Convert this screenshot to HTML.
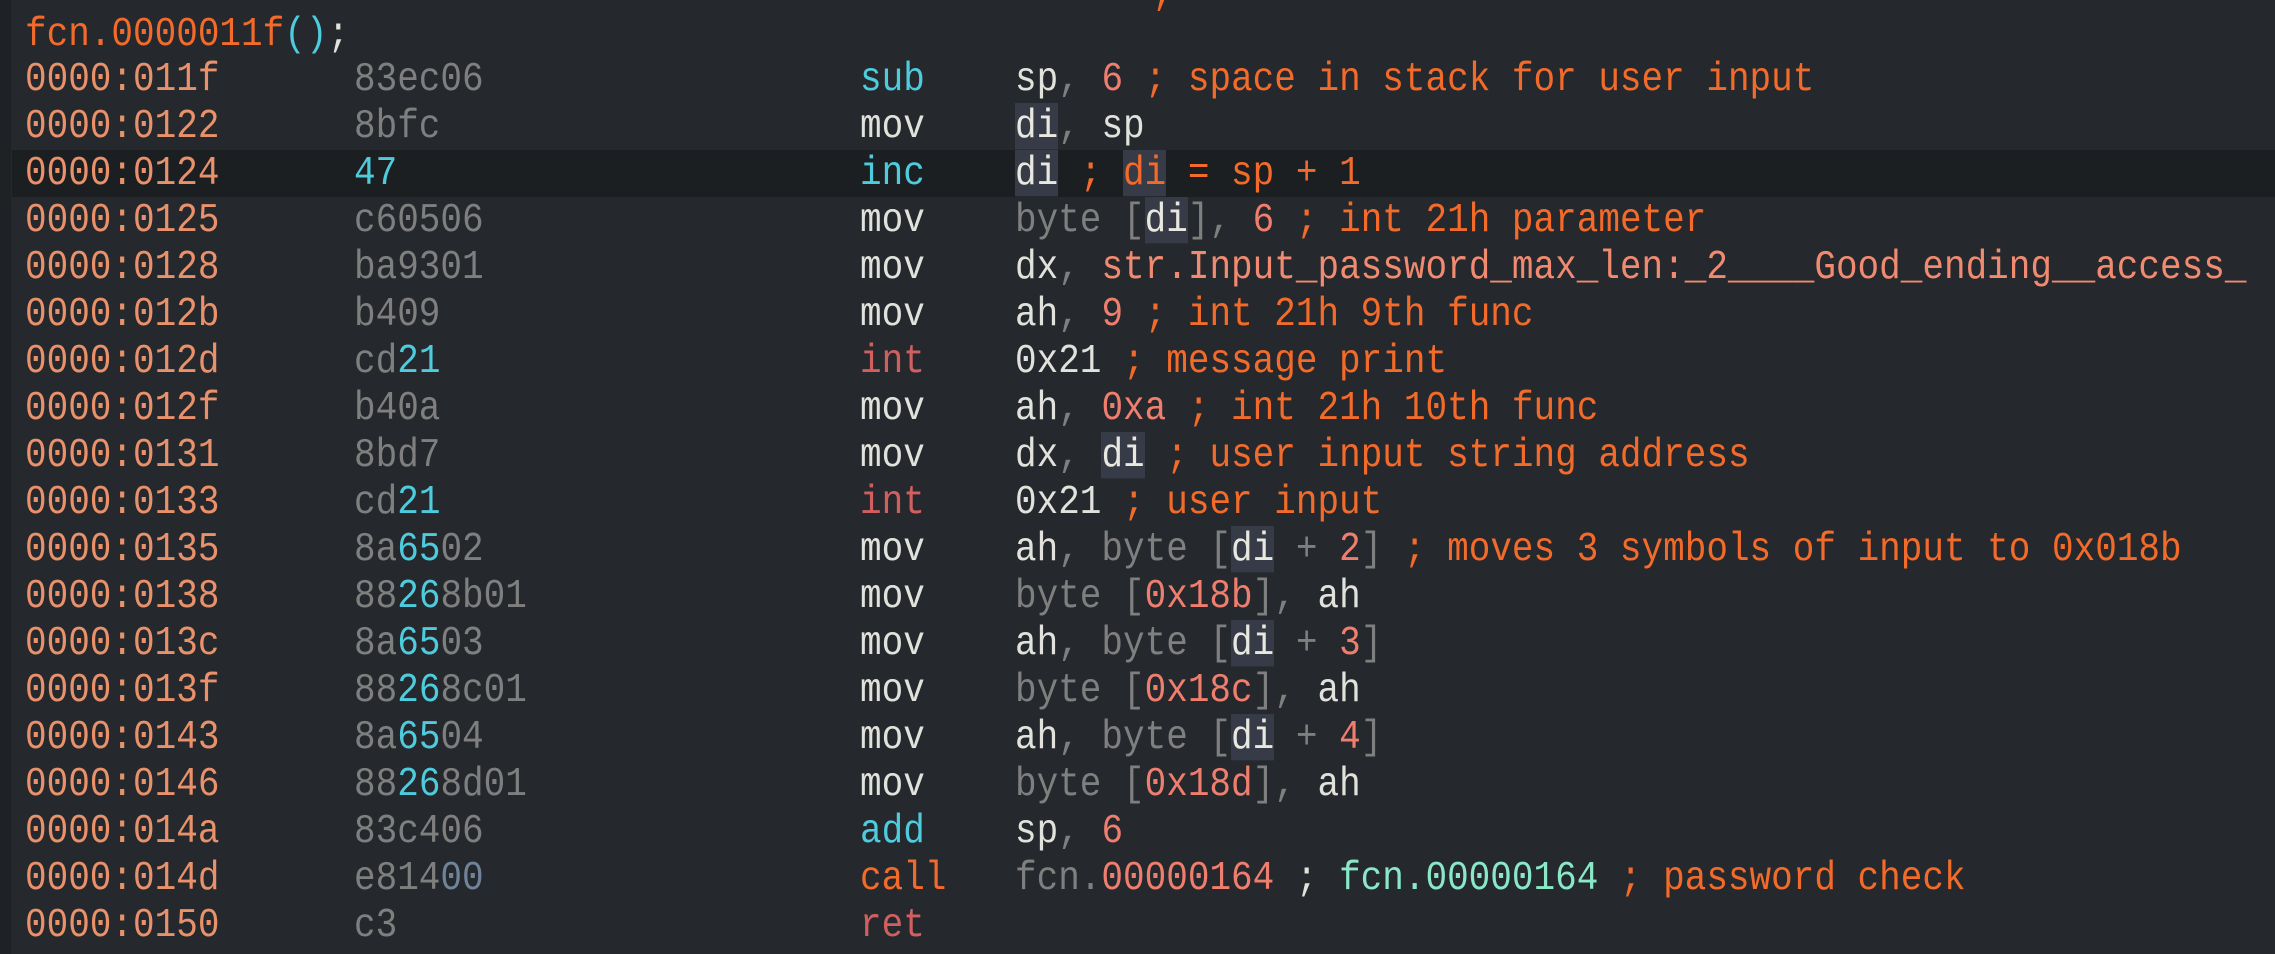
<!DOCTYPE html>
<html><head><meta charset="utf-8"><style>
html,body{margin:0;padding:0;}
body{width:2275px;height:954px;background:#25282c;overflow:hidden;position:relative;font-family:"Liberation Mono","DejaVu Sans Mono",monospace;font-size:36px;color:#e2e2dc;}
.strip{position:absolute;left:0;top:0;width:11px;height:954px;background:#1f2225;}
.r{position:absolute;left:12px;right:0;height:47px;line-height:47px;white-space:pre;}
.hl{background:#1c1f22;}
.c{position:absolute;top:0;transform:scaleY(1.13);transform-origin:50% 55%;}
.a{left:13px;color:#e8916a;}
.b{left:342px;color:#7f7f7f;}
.m{left:848px;}
.o{left:1003px;}
.cy{color:#4ecbdc}.w{color:#e2e2dc}.g{color:#7f7f7f}.or{color:#f26b2a}.n{color:#ef7e6e}.rd{color:#d06060}.tl{color:#8ae8c8}.bg{color:#6f8499}.sa{color:#f08a70}
.d,.dn{background:#363b47;}
.d{color:#e8e8e0}
.dn{color:#f26b2a}
</style></head><body>
<div class="strip"></div>
<div class="r" style="top:-30px"><span class="c or" style="left:1141px">,</span></div>
<div class="r" style="top:11px"><span class="c" style="left:13px"><span class="or">fcn.0000011f</span><span class="cy">()</span><span class="w">;</span></span></div>
<div class="r" style="top:56px"><span class="c a">0000:011f</span><span class="c b">83ec06</span><span class="c m cy">sub</span><span class="c o"><span class="w">sp</span><span class="g">,</span> <span class="n">6</span><span class="or"> ; space in stack for user input</span></span></div>
<div class="r" style="top:103px"><span class="c a">0000:0122</span><span class="c b">8bfc</span><span class="c m w">mov</span><span class="c o"><span class="d">di</span><span class="g">,</span> <span class="w">sp</span></span></div>
<div class="r hl" style="top:150px"><span class="c a">0000:0124</span><span class="c b cy">47</span><span class="c m cy">inc</span><span class="c o"><span class="d">di</span><span class="or"> ; </span><span class="dn">di</span><span class="or"> = sp + 1</span></span></div>
<div class="r" style="top:197px"><span class="c a">0000:0125</span><span class="c b">c60506</span><span class="c m w">mov</span><span class="c o"><span class="g">byte [</span><span class="d">di</span><span class="g">],</span> <span class="n">6</span><span class="or"> ; int 21h parameter</span></span></div>
<div class="r" style="top:244px"><span class="c a">0000:0128</span><span class="c b">ba9301</span><span class="c m w">mov</span><span class="c o"><span class="w">dx</span><span class="g">,</span> <span class="sa">str.Input_password_max_len:_2____Good_ending__access_</span></span></div>
<div class="r" style="top:291px"><span class="c a">0000:012b</span><span class="c b">b409</span><span class="c m w">mov</span><span class="c o"><span class="w">ah</span><span class="g">,</span> <span class="n">9</span><span class="or"> ; int 21h 9th func</span></span></div>
<div class="r" style="top:338px"><span class="c a">0000:012d</span><span class="c b">cd<span class="cy">21</span></span><span class="c m rd">int</span><span class="c o"><span class="w">0x21</span><span class="or"> ; message print</span></span></div>
<div class="r" style="top:385px"><span class="c a">0000:012f</span><span class="c b">b40a</span><span class="c m w">mov</span><span class="c o"><span class="w">ah</span><span class="g">,</span> <span class="n">0xa</span><span class="or"> ; int 21h 10th func</span></span></div>
<div class="r" style="top:432px"><span class="c a">0000:0131</span><span class="c b">8bd7</span><span class="c m w">mov</span><span class="c o"><span class="w">dx</span><span class="g">,</span> <span class="d">di</span><span class="or"> ; user input string address</span></span></div>
<div class="r" style="top:479px"><span class="c a">0000:0133</span><span class="c b">cd<span class="cy">21</span></span><span class="c m rd">int</span><span class="c o"><span class="w">0x21</span><span class="or"> ; user input</span></span></div>
<div class="r" style="top:526px"><span class="c a">0000:0135</span><span class="c b">8a<span class="cy">65</span>02</span><span class="c m w">mov</span><span class="c o"><span class="w">ah</span><span class="g">, byte [</span><span class="d">di</span><span class="g"> + </span><span class="n">2</span><span class="g">]</span><span class="or"> ; moves 3 symbols of input to 0x018b</span></span></div>
<div class="r" style="top:573px"><span class="c a">0000:0138</span><span class="c b">88<span class="cy">26</span>8b01</span><span class="c m w">mov</span><span class="c o"><span class="g">byte [</span><span class="n">0x18b</span><span class="g">],</span> <span class="w">ah</span></span></div>
<div class="r" style="top:620px"><span class="c a">0000:013c</span><span class="c b">8a<span class="cy">65</span>03</span><span class="c m w">mov</span><span class="c o"><span class="w">ah</span><span class="g">, byte [</span><span class="d">di</span><span class="g"> + </span><span class="n">3</span><span class="g">]</span></span></div>
<div class="r" style="top:667px"><span class="c a">0000:013f</span><span class="c b">88<span class="cy">26</span>8c01</span><span class="c m w">mov</span><span class="c o"><span class="g">byte [</span><span class="n">0x18c</span><span class="g">],</span> <span class="w">ah</span></span></div>
<div class="r" style="top:714px"><span class="c a">0000:0143</span><span class="c b">8a<span class="cy">65</span>04</span><span class="c m w">mov</span><span class="c o"><span class="w">ah</span><span class="g">, byte [</span><span class="d">di</span><span class="g"> + </span><span class="n">4</span><span class="g">]</span></span></div>
<div class="r" style="top:761px"><span class="c a">0000:0146</span><span class="c b">88<span class="cy">26</span>8d01</span><span class="c m w">mov</span><span class="c o"><span class="g">byte [</span><span class="n">0x18d</span><span class="g">],</span> <span class="w">ah</span></span></div>
<div class="r" style="top:808px"><span class="c a">0000:014a</span><span class="c b">83c406</span><span class="c m cy">add</span><span class="c o"><span class="w">sp</span><span class="g">,</span> <span class="n">6</span></span></div>
<div class="r" style="top:855px"><span class="c a">0000:014d</span><span class="c b">e814<span class="bg">00</span></span><span class="c m or">call</span><span class="c o"><span class="g">fcn.</span><span class="n">00000164</span><span class="w"> ; </span><span class="tl">fcn.00000164</span><span class="or"> ; password check</span></span></div>
<div class="r" style="top:902px"><span class="c a">0000:0150</span><span class="c b">c3</span><span class="c m rd">ret</span></div>
</body></html>
